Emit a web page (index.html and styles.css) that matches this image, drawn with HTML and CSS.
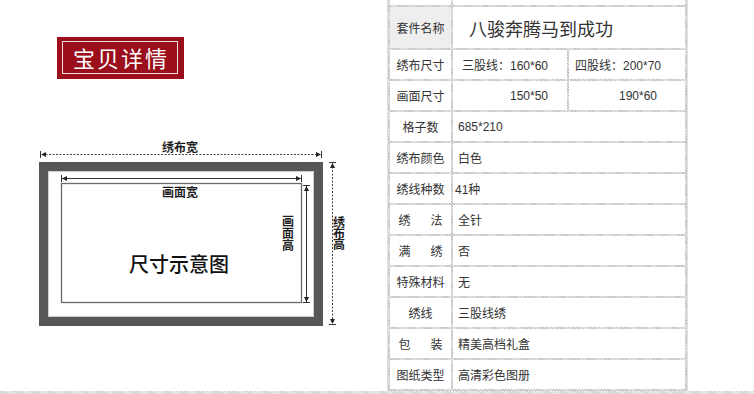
FILE: index.html
```html
<!DOCTYPE html>
<html lang="zh-CN">
<head>
<meta charset="utf-8">
<title>宝贝详情</title>
<link rel="stylesheet" href="styles.css">
</head>
<body>
<div class="page">
  <div class="left">
    <div class="banner"><span class="banner-inner">宝贝详情</span></div>
    <svg class="diagram" width="380" height="200" viewBox="0 0 380 200" xmlns="http://www.w3.org/2000/svg">
      <!-- 绣布宽 -->
      <text class="lbl-s" x="180" y="17" text-anchor="middle">绣布宽</text>
      <line x1="42" y1="19.5" x2="320" y2="19.5" stroke="#444" stroke-width="1" stroke-dasharray="2 1.5"/>
      <line x1="40.5" y1="16" x2="40.5" y2="23" stroke="#333" stroke-width="1"/>
      <line x1="321.5" y1="16" x2="321.5" y2="23" stroke="#333" stroke-width="1"/>
      <polygon points="41,19.5 46,17 46,22" fill="#222"/>
      <polygon points="321,19.5 316,17 316,22" fill="#222"/>
      <!-- frame -->
      <rect x="43.5" y="31.5" width="275" height="155" fill="#fff" stroke="#575757" stroke-width="9"/>
      <rect x="48.5" y="36.5" width="265" height="145" fill="none" stroke="#cfcfcf" stroke-width="1"/>
      <!-- picture -->
      <rect x="61.5" y="48.5" width="240" height="119" fill="#fff" stroke="#6a6a6a" stroke-width="1.3"/>
      <!-- 画面宽 -->
      <line x1="62" y1="43.5" x2="301" y2="43.5" stroke="#333" stroke-width="1"/>
      <line x1="61.5" y1="40" x2="61.5" y2="47" stroke="#333" stroke-width="1"/>
      <line x1="301.5" y1="40" x2="301.5" y2="47" stroke="#333" stroke-width="1"/>
      <polygon points="62,43.5 67,41 67,46" fill="#222"/>
      <polygon points="301,43.5 296,41 296,46" fill="#222"/>
      <text class="lbl-s" x="180" y="62" text-anchor="middle">画面宽</text>
      <!-- 画面高 -->
      <line x1="306.5" y1="51" x2="306.5" y2="167" stroke="#333" stroke-width="1"/>
      <line x1="303" y1="50.5" x2="310" y2="50.5" stroke="#333" stroke-width="1"/>
      <line x1="303" y1="167.5" x2="310" y2="167.5" stroke="#333" stroke-width="1"/>
      <polygon points="306.5,51 304,56 309,56" fill="#222"/>
      <polygon points="306.5,167 304,162 309,162" fill="#222"/>
      <text class="lbl-s vert" x="288" y="80">画面高</text>
      <!-- 绣布高 -->
      <line x1="332.5" y1="28" x2="332.5" y2="189" stroke="#444" stroke-width="1" stroke-dasharray="2 1.5"/>
      <line x1="329" y1="27.5" x2="336" y2="27.5" stroke="#333" stroke-width="1"/>
      <line x1="329" y1="189.5" x2="336" y2="189.5" stroke="#333" stroke-width="1"/>
      <polygon points="332.5,28 330,33 335,33" fill="#222"/>
      <polygon points="332.5,189 330,184 335,184" fill="#222"/>
      <text class="lbl-s vert tightv" x="339" y="81">绣布高</text>
      <!-- title -->
      <text class="lbl-l" x="179" y="137" text-anchor="middle">尺寸示意图</text>
    </svg>
  </div>
  <div class="right">
    <table class="spec">
      <colgroup><col class="c-label"><col class="c-v1"><col class="c-v2"></colgroup>
      <tr class="r-cut"><td></td><td colspan="2"></td></tr>
      <tr class="r-title"><th class="lbl shaded">套件名称</th><td colspan="2" class="val title">八骏奔腾马到成功</td></tr>
      <tr><th class="lbl">绣布尺寸</th><td class="val p-a">三股线：160*60</td><td class="val p-b">四股线：200*70</td></tr>
      <tr><th class="lbl">画面尺寸</th><td class="val p-c">150*50</td><td class="val p-d">190*60</td></tr>
      <tr><th class="lbl">格子数</th><td colspan="2" class="val">685*210</td></tr>
      <tr><th class="lbl">绣布颜色</th><td colspan="2" class="val">白色</td></tr>
      <tr><th class="lbl">绣线种数</th><td colspan="2" class="val tight">41种</td></tr>
      <tr><th class="lbl"><span class="spread">绣法</span></th><td colspan="2" class="val">全针</td></tr>
      <tr><th class="lbl"><span class="spread">满绣</span></th><td colspan="2" class="val">否</td></tr>
      <tr><th class="lbl">特殊材料</th><td colspan="2" class="val">无</td></tr>
      <tr><th class="lbl">绣线</th><td colspan="2" class="val">三股线绣</td></tr>
      <tr><th class="lbl"><span class="spread">包装</span></th><td colspan="2" class="val">精美高档礼盒</td></tr>
      <tr><th class="lbl">图纸类型</th><td colspan="2" class="val">高清彩色图册</td></tr>
    </table>
  </div>
</div>
<div class="strip"></div>
</body>
</html>
```

FILE: styles.css
```css
html, body {
  margin: 0;
  padding: 0;
  background: #fff;
}
body {
  font-family: "Liberation Sans", "Noto Sans CJK SC", sans-serif;
  color: #333;
}
.page {
  display: flex;
  align-items: flex-start;
  height: 391px;
  overflow: hidden;
}
.left {
  flex: none;
  width: 387px;
  display: flex;
  flex-direction: column;
  align-items: flex-start;
  padding-top: 37px;
}
.banner {
  margin-left: 57px;
  background: #9a0f1b;
  padding: 4px 6px 5px 5px;
}
.banner-inner {
  display: block;
  width: 114px;
  height: 31px;
  border: 1px solid #f2dcdc;
  color: #fff;
  font-family: "Noto Sans CJK SC", sans-serif;
  font-size: 22px;
  line-height: 31px;
  letter-spacing: 2px;
  text-indent: 2px;
  text-align: center;
}
.diagram {
  display: block;
  margin-top: 56px;
}
.lbl-s {
  font-family: "Noto Sans CJK SC", sans-serif;
  font-size: 12px;
  font-weight: bold;
  fill: #1e1e1e;
}
.vert {
  writing-mode: vertical-rl;
  text-orientation: upright;
}
.tightv {
  letter-spacing: -1px;
}
.lbl-l {
  font-family: "Noto Sans CJK SC", sans-serif;
  font-size: 20px;
  font-weight: 500;
  fill: #111;
}
.right {
  flex: none;
}
.spec {
  margin-top: -18px;
  table-layout: fixed;
  width: 301px;
  border-collapse: separate;
  border-spacing: 2px;
  border: 1px solid #e0e0e0;
  background: repeating-linear-gradient(45deg, #c2c2c2 0 1px, #e6e6e6 1px 2px);
}
.c-label { width: 61px; }
.c-v1 { width: 114px; }
.c-v2 { width: 116px; }
.spec td, .spec th {
  background: #fff;
  padding: 0;
  height: 29px;
  font-size: 12px;
  font-weight: normal;
  color: #333;
  white-space: nowrap;
  vertical-align: middle;
}
.spec .r-cut td { height: 20px; }
.spec .r-title th, .spec .r-title td { height: 41px; }
.spec th.lbl {
  text-align: center;
  font-family: "Noto Sans CJK SC", sans-serif;
}
.spec th.shaded { background: #eeeeee; }
.spec td.val {
  text-align: left;
  padding-left: 5px;
}
.spec td.tight { padding-left: 2px; }
.spec td.title {
  padding-left: 16px;
  font-family: "Noto Sans CJK SC", sans-serif;
  font-size: 18px;
  color: #333;
}
.spec td.p-a { padding-left: 9px; }
.spec td.p-b { padding-left: 6px; }
.spec td.p-c { padding-left: 57px; }
.spec td.p-d { padding-left: 50px; }
.spread {
  display: inline-block;
  width: 44px;
  text-align: justify;
  text-align-last: justify;
}
.strip {
  height: 3px;
  background: repeating-linear-gradient(45deg, #cfcfcf 0 1px, #eeeeee 1px 2px);
}
```
